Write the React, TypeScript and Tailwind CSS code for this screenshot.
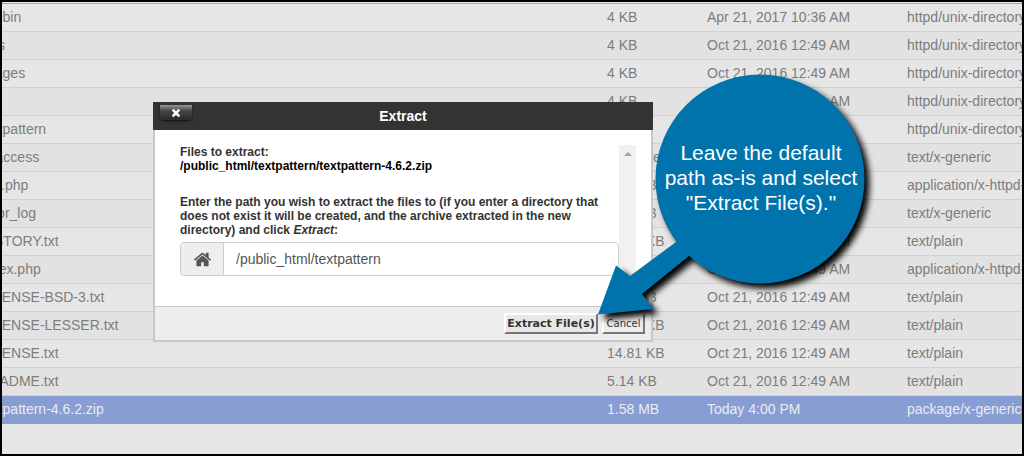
const files = [
  { name: "cgi-bin", size: "4 KB", modified: "Apr 21, 2017 10:36 AM", type: "httpd/unix-directory" },
  { name: "files", size: "4 KB", modified: "Oct 21, 2016 12:49 AM", type: "httpd/unix-directory" },
  { name: "images", size: "4 KB", modified: "Oct 21, 2016 12:49 AM", type: "httpd/unix-directory" },
  { name: "rpc", size: "4 KB", modified: "Oct 21, 2016 12:49 AM", type: "httpd/unix-directory" },
  { name: "textpattern", size: "4 KB", modified: "Oct 21, 2016", type: "httpd/unix-directory" },
  { name: ".htaccess", size: "980 bytes", modified: "Oct 21, 2016", type: "text/x-generic" },
  { name: "css.php", size: "1.35 KB", modified: "Oct 21, 2016", type: "application/x-httpd-php" },
  { name: "error_log", size: "2.21 KB", modified: "Oct 21, 2016", type: "text/x-generic" },
  { name: "HISTORY.txt", size: "70.12 KB", modified: "Oct 21, 2016 12:49 AM", type: "text/plain" },
  { name: "index.php", size: "2.18 KB", modified: "Oct 21, 2016 12:49 AM", type: "application/x-httpd-php" },
  { name: "LICENSE-BSD-3.txt", size: "1.49 KB", modified: "Oct 21, 2016 12:49 AM", type: "text/plain" },
  { name: "LICENSE-LESSER.txt", size: "25.91 KB", modified: "Oct 21, 2016 12:49 AM", type: "text/plain" },
  { name: "LICENSE.txt", size: "14.81 KB", modified: "Oct 21, 2016 12:49 AM", type: "text/plain" },
  { name: "README.txt", size: "5.14 KB", modified: "Oct 21, 2016 12:49 AM", type: "text/plain" },
  { name: "textpattern-4.6.2.zip", size: "1.58 MB", modified: "Today 4:00 PM", type: "package/x-generic", selected: true },
];

function FileTable() {
  return (
    <table className="-ml-[30px] w-[calc(100%+60px)] table-fixed border-collapse border-t border-[#a8a8a8] text-left text-sm whitespace-nowrap">
      <colgroup>
        <col />
        <col className="w-[100px]" />
        <col className="w-[200px]" />
        <col className="w-[153px]" />
      </colgroup>
      <tbody>
        {files.map((file) => (
          <tr
            key={file.name}
            className={
              file.selected
                ? "h-7 bg-[#879dd3] text-[#ececec]"
                : "h-7 border-b border-[#d0d0d0] text-[#7d7d7d] odd:bg-[#e6e6e6] even:bg-[#e2e2e2]"
            }
          >
            <td className="px-2 pb-0.5">{file.name}</td>
            <td className="px-2 pb-0.5">{file.size}</td>
            <td className="px-2 pb-0.5">{file.modified}</td>
            <td className="px-2 pb-0.5">{file.type}</td>
          </tr>
        ))}
      </tbody>
    </table>
  );
}

function HomeIcon() {
  return (
    <svg viewBox="0 0 1792 1792" className="size-[19px] fill-[#555555]" aria-hidden="true">
      <path d="M1472 992v480q0 26-19 45t-45 19h-384v-384h-256v384h-384q-26 0-45-19t-19-45v-480q0-1 .5-3t.5-3l575-474 575 474q1 2 1 6zm223-69l-62 74q-8 9-21 11h-3q-13 0-21-7l-692-577-692 577q-12 8-24 7-13-2-21-11l-62-74q-8-10-7-23.5t11-21.5l719-599q32-26 76-26t76 26l244 204v-195q0-14 9-23t23-9h192q14 0 23 9t9 23v408l219 182q10 8 11 21.5t-7 23.5z" />
    </svg>
  );
}

function ExtractDialog() {
  return (
    <div
      role="dialog"
      aria-labelledby="extract-title"
      className="absolute top-[102px] left-[153px] w-full max-w-[500px]"
    >
      <div className="grid h-7 grid-cols-[1fr_auto_1fr] items-center bg-[#333333] px-[7px]">
        <button
          type="button"
          aria-label="Close"
          className="mt-[3px] flex h-[15px] w-8 items-center justify-center self-start rounded-b-sm bg-linear-to-b from-[#999999] via-[#444444] via-40% to-[#2b2b2b] shadow-[0_1px_2px_#111111]"
        >
          <svg viewBox="0 0 8 8" className="size-2 stroke-white" strokeWidth="2.6" aria-hidden="true">
            <path d="M.6 .6l6.800 6.800M7.400 .6L.6 7.400" />
          </svg>
        </button>
        <h1 id="extract-title" className="text-sm font-bold text-white">
          Extract
        </h1>
      </div>

      <div className="border-2 border-t-0 border-[#c8c8c8] bg-white">
        <div className="flex pt-[15px] pr-[15px] pb-[30px] pl-[25px]">
          <div className="min-w-0 grow text-xs leading-[14px] font-bold text-[#333333]">
            <p>Files to extract:</p>
            <p className="text-black">/public_html/textpattern/textpattern-4.6.2.zip</p>
            <label htmlFor="path" className="mt-[22px] block pr-2">
              Enter the path you wish to extract the files to (if you enter a directory that does not
              exist it will be created, and the archive extracted in the new directory) and click{" "}
              <em>Extract</em>:
            </label>
            <div className="mt-[5px] flex h-[34px] rounded border border-[#cccccc]">
              <span className="flex w-[43px] items-center justify-center rounded-l border-r border-[#cccccc] bg-[#eeeeee]">
                <HomeIcon />
              </span>
              <input
                id="path"
                type="text"
                defaultValue="/public_html/textpattern"
                className="min-w-0 grow rounded-r px-3 text-sm font-normal text-[#555555] outline-none"
              />
            </div>
          </div>
          <div className="flex w-[17px] shrink-0 justify-center bg-[#f1f1f1] pt-[7px]">
            <svg viewBox="0 0 8 4" className="h-1 w-2 fill-[#a3a3a3]" aria-hidden="true">
              <path d="M0 4l4-4 4 4z" />
            </svg>
          </div>
        </div>

        <div className="flex h-[34px] justify-end gap-1 border-t border-[#c8c8c8] bg-[#ededed] px-[6px] pt-[6px] font-['DejaVu_Sans',sans-serif] text-[#333333]">
          <button
            type="button"
            className="h-[21px] w-[94px] border-2 border-t-white border-r-[#777777] border-b-[#777777] border-l-white bg-[#e8e8e8] text-[11px] leading-4 font-bold whitespace-nowrap"
          >
            Extract File(s)
          </button>
          <button
            type="button"
            className="h-[21px] w-[43px] border-2 border-t-white border-r-[#777777] border-b-[#777777] border-l-white bg-[#ededed] text-[10px] leading-4"
          >
            Cancel
          </button>
        </div>
      </div>
    </div>
  );
}

function Callout() {
  return (
    <div className="absolute top-[70px] left-[590px] h-[260px] w-[290px]">
      <svg viewBox="590 70 290 260" className="size-full overflow-visible" aria-hidden="true">
        <g className="fill-[#0073ac] drop-shadow-[5px_5px_3px_#000000]">
          <circle cx="760" cy="179" r="104.5" />
          <path d="M598 314.500L616 265.500L630 276L676 242L700 200L720 235L689 256L642 294L653.500 309z" />
        </g>
      </svg>
      <p className="absolute inset-x-0 top-[70px] pl-[52px] text-center text-[21px] leading-[25px] text-white">
        Leave the default
        <br />
        path as-is and select
        <br />
        "Extract File(s)."
      </p>
    </div>
  );
}

export default function App() {
  return (
    <main className="relative font-['Liberation_Sans',Arial,sans-serif]">
      <div className="overflow-hidden border-2 border-black bg-[#e6e6e6] pt-px pb-[30px]">
        <FileTable />
      </div>
      <ExtractDialog />
      <Callout />
    </main>
  );
}
